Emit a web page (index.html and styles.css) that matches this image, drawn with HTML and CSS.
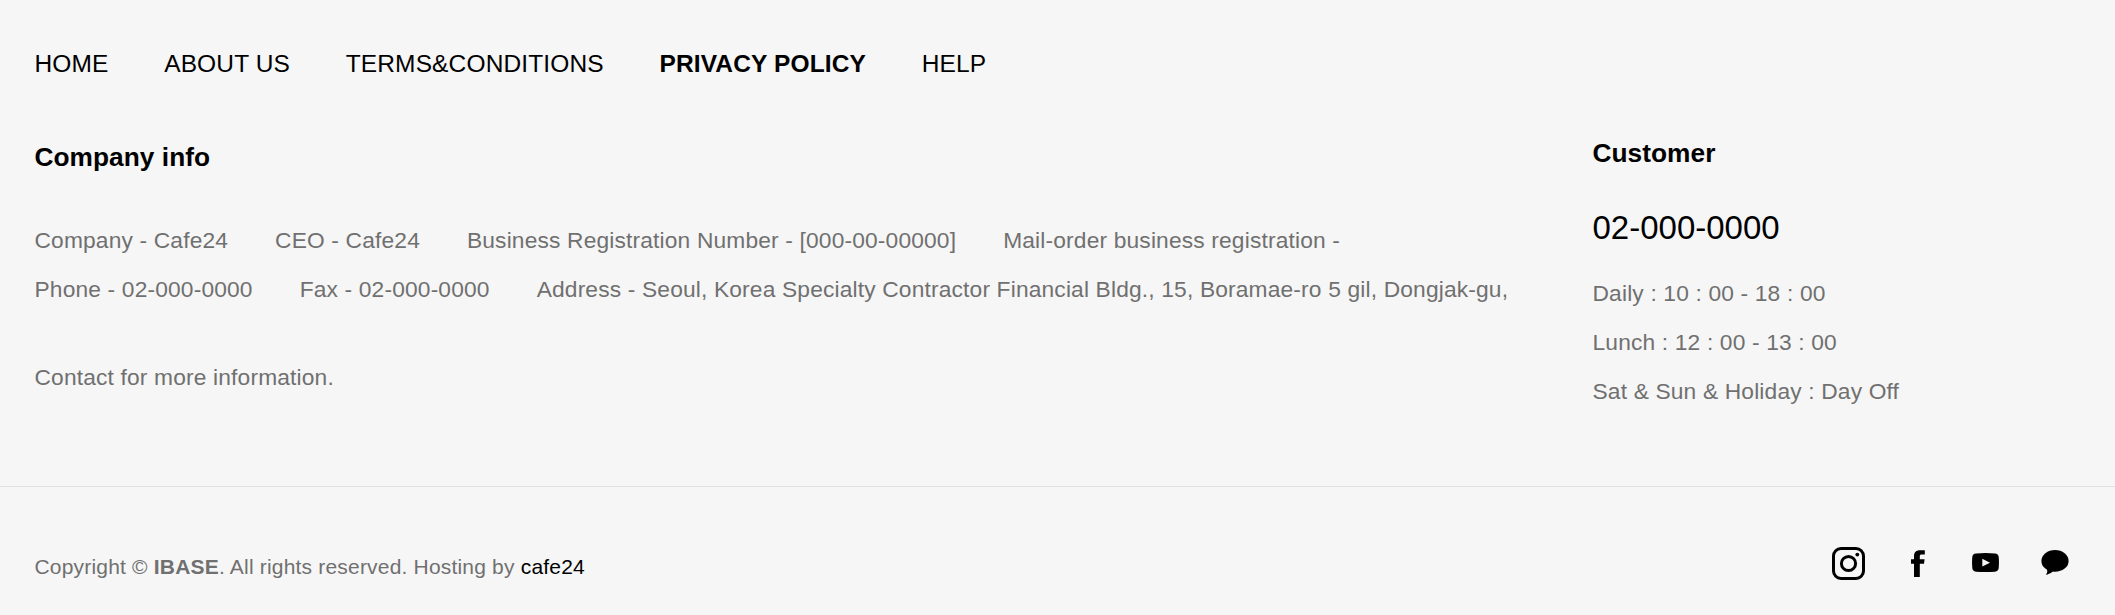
FILE: index.html
```html
<!DOCTYPE html>
<html lang="en">
<head>
  <meta charset="UTF-8">
  <title>IBASE</title>
  <link rel="stylesheet" href="styles.css">
</head>
<body>
  <footer class="footer">
    <div class="footer-top">
      <nav class="menu">
        <a href="#">HOME</a>
        <a href="#">ABOUT US</a>
        <a href="#">TERMS&amp;CONDITIONS</a>
        <a href="#" class="privacy">PRIVACY POLICY</a>
        <a href="#">HELP</a>
      </nav>

      <div class="columns">
        <div class="company">
          <h3>Company info</h3>
          <div class="row">
            <span>Company - Cafe24</span>
            <span>CEO - Cafe24</span>
            <span>Business Registration Number - [000-00-00000]</span>
            <span>Mail-order business registration -</span>
          </div>
          <div class="row">
            <span>Phone - 02-000-0000</span>
            <span>Fax - 02-000-0000</span>
            <span>Address - Seoul, Korea Specialty Contractor Financial Bldg., 15, Boramae-ro 5 gil, Dongjak-gu,</span>
          </div>
          <p class="contact">Contact for more information.</p>
        </div>

        <div class="customer">
          <h3>Customer</h3>
          <p class="phone">02-000-0000</p>
          <p>Daily : 10 : 00 - 18 : 00</p>
          <p>Lunch : 12 : 00 - 13 : 00</p>
          <p>Sat &amp; Sun &amp; Holiday : Day Off</p>
        </div>
      </div>
    </div>

    <div class="footer-bottom">
      <p class="copyright">Copyright © <strong>IBASE</strong>. All rights reserved. Hosting by <a href="#">cafe24</a></p>
      <div class="sns">
        <a href="#" aria-label="Instagram">
          <svg width="34" height="34" viewBox="0 0 34 34">
            <rect x="1.5" y="1.5" width="30" height="30" rx="7.5" fill="none" stroke="#000" stroke-width="3"/>
            <circle cx="16.5" cy="16.5" r="7.1" fill="none" stroke="#000" stroke-width="3"/>
            <circle cx="25.3" cy="7.6" r="1.9"/>
          </svg>
        </a>
        <a href="#" aria-label="Facebook">
          <svg width="14" height="34" viewBox="0 0 14 34">
            <path d="M3 30V16.8H0V12.2H3V9.2C3 5.2 5.2 3.2 8.8 3.2H13.8V7.6H10.8C9.4 7.6 8.8 8.2 8.8 9.4V12.2H13.6L13 16.8H8.8V30Z"/>
          </svg>
        </a>
        <a href="#" aria-label="YouTube">
          <svg width="27" height="34" viewBox="0 0 27 34">
            <path d="M4 6.6Q13.5 5.6 23 6.6Q26.4 7 26.7 10Q27.2 15.5 26.7 21Q26.4 24.4 23 24.7Q13.5 25.4 4 24.7Q.6 24.4 .3 21Q-.2 15.5 .3 10Q.6 7 4 6.6Z"/>
            <path d="M10.3 11.8V19.6L18 15.7Z" fill="#f6f6f6"/>
          </svg>
        </a>
        <a href="#" aria-label="Chat">
          <svg width="28" height="34" viewBox="0 0 28 34">
            <ellipse cx="14" cy="13.9" rx="13.6" ry="10.8"/>
            <path d="M6 21Q7 24.6 5 28Q10 27 13 23.6Z"/>
          </svg>
        </a>
      </div>
    </div>
  </footer>
</body>
</html>
```
FILE: styles.css
```css
body {
  margin: 0;
  background: #f6f6f6;
  color: #707070;
  font-family: "Liberation Sans", Arial, sans-serif;
  font-size: 22.75px;
  line-height: 49px;
  letter-spacing: 0.165px;
}

a {
  color: #000;
  text-decoration: none;
}

h3,
p {
  margin: 0;
}

h3 {
  color: #000;
  font-size: 26.25px;
  line-height: 30px;
  letter-spacing: 0.05px;
}

.footer-top {
  box-sizing: border-box;
  height: 486px;
  padding: 50px 34px 0 34.5px;
}

.menu {
  display: flex;
  gap: 55.6px;
  font-size: 24.5px;
  line-height: 28px;
  letter-spacing: 0.14px;
}

.privacy {
  font-weight: bold;
}

.columns {
  display: flex;
  margin-top: 60px;
}

.company {
  width: 1558px;
  padding-top: 4px;
}

.company h3 {
  margin-bottom: 44px;
}

.row {
  display: flex;
  gap: 47px;
  white-space: nowrap;
}

.contact {
  margin-top: 39px;
}

.customer .phone {
  margin: 40px 0 21px;
  color: #000;
  font-size: 33px;
  line-height: 40px;
  letter-spacing: 0;
}

.footer-bottom {
  display: flex;
  justify-content: space-between;
  padding: 60px 46px 0 34.5px;
  border-top: 1px solid #e0e0e0;
}

.copyright {
  padding-top: 5px;
  font-size: 21px;
  line-height: 30px;
  letter-spacing: 0.19px;
}

.sns {
  display: flex;
  gap: 45px;
}

.sns a:nth-child(3) {
  margin: 0 -3px 0 2px;
}

.sns svg {
  display: block;
}
```
